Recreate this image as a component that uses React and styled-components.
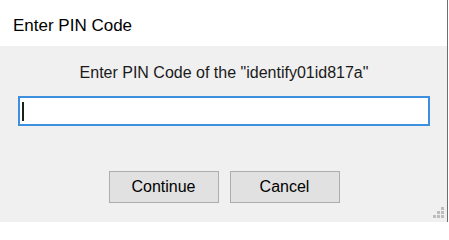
import React from 'react';
import styled, { createGlobalStyle } from 'styled-components';

const GlobalStyle = createGlobalStyle`
  html, body {
    margin: 0;
    padding: 0;
    background: #ffffff;
  }
  body {
    font-family: "Liberation Sans", Arial, sans-serif;
  }
`;

function App() {
  return (
    <>
      <GlobalStyle />
      <Window>
        <TitleBar>Enter PIN Code</TitleBar>
        <Content>
          <Prompt>Enter PIN Code of the "identify01id817a"</Prompt>
          <PinField>
            <Caret />
          </PinField>
          <ButtonRow>
            <Button>Continue</Button>
            <Button>Cancel</Button>
          </ButtonRow>
          <SizeGrip width="14" height="14" viewBox="0 0 14 14">
            <rect x="10" y="1" width="3" height="3" />
            <rect x="6" y="5" width="3" height="3" />
            <rect x="10" y="5" width="3" height="3" />
            <rect x="2" y="9" width="3" height="3" />
            <rect x="6" y="9" width="3" height="3" />
            <rect x="10" y="9" width="3" height="3" />
          </SizeGrip>
        </Content>
      </Window>
    </>
  );
}

export default App;

const Window = styled.div`
  width: 447px;
  height: 222px;
  border-right: 1px solid #6e6e6e;
  display: flex;
  flex-direction: column;
  overflow: hidden;
`;

const TitleBar = styled.div`
  height: 30px;
  padding: 16px 0 0 13px;
  background: #ffffff;
  color: #000000;
  font-size: 17px;
  line-height: 20px;
`;

const Content = styled.div`
  position: relative;
  flex: 1;
  background: #f0f0f0;
  display: flex;
  flex-direction: column;
  align-items: center;
  padding: 17px 17px 0 18px;
`;

const Prompt = styled.div`
  font-size: 16px;
  line-height: 20px;
  color: #1a1a1a;
  white-space: nowrap;
`;

const PinField = styled.div`
  box-sizing: border-box;
  align-self: stretch;
  height: 30px;
  margin-top: 13px;
  border: 2px solid #3d8fdf;
  background: #ffffff;
  display: flex;
  align-items: center;
  padding-left: 2px;
`;

const Caret = styled.span`
  width: 2px;
  height: 19px;
  background: #1e1e1e;
`;

const ButtonRow = styled.div`
  display: flex;
  gap: 11px;
  margin-top: 45px;
`;

const Button = styled.button`
  box-sizing: border-box;
  width: 110px;
  height: 32px;
  margin: 0;
  padding: 0;
  background: #e1e1e1;
  border: 1px solid #adadad;
  border-radius: 0;
  color: #000000;
  font-family: "Liberation Sans", Arial, sans-serif;
  font-size: 16px;
`;

const SizeGrip = styled.svg`
  position: absolute;
  right: 2px;
  bottom: 2px;
  fill: #bdbdbd;
`;
